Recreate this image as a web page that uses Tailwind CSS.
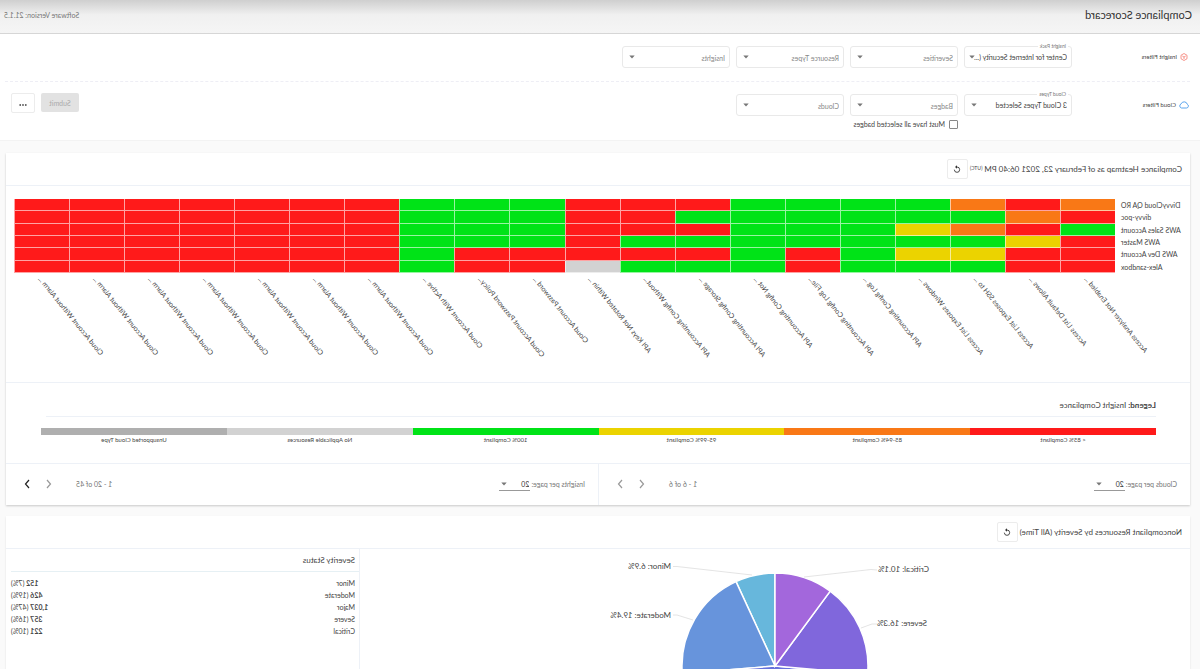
<!DOCTYPE html>
<html lang="en">
<head>
<meta charset="utf-8">
<title>Compliance Scorecard</title>
<script src="https://cdn.jsdelivr.net/npm/@tailwindcss/browser@4"></script>
</head>
<body class="bg-[#fafafa] overflow-hidden">
<svg class="hidden">
  <symbol id="caret" viewBox="0 0 6 4"><path d="M0.3 0.5h5.4L3 3.5z" fill="#777"/></symbol>
  <symbol id="reload" viewBox="0 0 24 24"><path d="M13 6H12A8 8 0 1 0 20 14" fill="none" stroke="#333" stroke-width="2.600"/><path d="M12 0.500L18 6L12 11.500z" fill="#333"/></symbol>
  <symbol id="prev" viewBox="0 0 6 10"><path d="M5 1L1.500 5L5 9" fill="none" stroke="currentColor" stroke-width="1.200"/></symbol>
  <symbol id="next" viewBox="0 0 6 10"><path d="M1 1L4.500 5L1 9" fill="none" stroke="currentColor" stroke-width="1.200"/></symbol>
</svg>
<!-- The whole page is shown mirrored -->
<div class="-scale-x-100 h-screen overflow-hidden bg-[#fafafa] font-[Lato,'Liberation_Sans',sans-serif] text-[7px] leading-[10px] text-[#444] flex flex-col">
  <header class="shrink-0 h-[34px] border-b border-[#d6d6d6] bg-linear-to-b from-[#cfcfcf] from-0% via-[#f0f0f0] via-45% to-[#f5f5f5] flex items-center justify-between pl-2 pr-1 pb-[3px]">
    <h1 class="text-[11px] leading-4 text-[#333]">Compliance Scorecard</h1>
    <span class="text-[7px] text-[#777]">Software Version: 21.1.5</span>
  </header>

  <form class="shrink-0 h-[107px] bg-white border-b border-[#f3f3f3] pl-[10px] pr-[5px]">
    <div class="h-12 border-b border-dashed border-[#eeeef5] flex items-start pt-3">
      <div class="w-[118px] h-[22px] flex items-center gap-[3px] pl-[2px] text-[6px]">
        <svg class="size-2" viewBox="0 0 16 16" fill="none" stroke="#f4695b" stroke-width="1.400"><path d="M8 1l6 3.500v7L8 15l-6-3.500v-7z"/><path d="M4.500 6L8 8l3.500-2M8 8v4"/></svg>
        Insight Filters
      </div>
      <div class="flex gap-[6px]">
        <div class="relative w-[108px] h-[22px]">
          <select id="pack" class="appearance-none w-full h-full border border-[#e9e9e9] rounded-[3px] bg-white pl-1 pr-2 text-[7px]"><option>Center for Internet Security (...</option></select>
          <label for="pack" class="absolute left-1 -top-[3px] px-[2px] bg-white text-[5px] leading-[7px] text-[#777]">Insight Pack</label>
          <svg class="absolute right-[5px] top-[9px] w-[6px] h-1"><use href="#caret"/></svg>
        </div>
        <div class="relative w-[108px] h-[22px]">
          <select aria-label="Severities" class="appearance-none w-full h-full border border-[#e9e9e9] rounded-[3px] bg-white pl-1 pt-[2px] text-[7px] text-[#888]"><option>Severities</option></select>
          <svg class="absolute right-[7px] top-[9px] w-[6px] h-1"><use href="#caret"/></svg>
        </div>
        <div class="relative w-[108px] h-[22px]">
          <select aria-label="Resource Types" class="appearance-none w-full h-full border border-[#e9e9e9] rounded-[3px] bg-white pl-1 pt-[2px] text-[7px] text-[#888]"><option>Resource Types</option></select>
          <svg class="absolute right-[7px] top-[9px] w-[6px] h-1"><use href="#caret"/></svg>
        </div>
        <div class="relative w-[108px] h-[22px]">
          <select aria-label="Insights" class="appearance-none w-full h-full border border-[#e9e9e9] rounded-[3px] bg-white pl-1 pt-[2px] text-[7px] text-[#888]"><option>Insights</option></select>
          <svg class="absolute right-[7px] top-[9px] w-[6px] h-1"><use href="#caret"/></svg>
        </div>
      </div>
    </div>
    <div class="flex items-start pt-3">
      <div class="w-[118px] h-[22px] flex items-center gap-[3px] pl-px text-[6px]">
        <svg class="w-[10px] h-2" viewBox="0 0 20 16" fill="none" stroke="#4a9bea" stroke-width="1.800"><path d="M5 14a4 4 0 0 1-1.500-7.600a6.500 6.500 0 0 1 12.300-.6A4.300 4.300 0 0 1 15 14z"/></svg>
        Cloud Filters
      </div>
      <div class="flex gap-[6px]">
        <div class="relative w-[108px] h-[22px]">
          <select id="types" class="appearance-none w-full h-full border border-[#e9e9e9] rounded-[3px] bg-white pl-1 pr-3 text-[7px]"><option>3 Cloud Types Selected</option></select>
          <label for="types" class="absolute left-1 -top-[3px] px-[2px] bg-white text-[5px] leading-[7px] text-[#777]">Cloud Types</label>
          <svg class="absolute right-[7px] top-[9px] w-[6px] h-1"><use href="#caret"/></svg>
        </div>
        <div class="w-[108px]">
          <div class="relative h-[22px]">
            <select aria-label="Badges" class="appearance-none w-full h-full border border-[#e9e9e9] rounded-[3px] bg-white pl-1 pt-[2px] text-[7px] text-[#888]"><option>Badges</option></select>
            <svg class="absolute right-[7px] top-[9px] w-[6px] h-1"><use href="#caret"/></svg>
          </div>
          <label class="mt-[3px] flex items-center gap-1 whitespace-nowrap text-[7px] leading-[10px]"><input type="checkbox" class="appearance-none size-[9px] border border-[#888] rounded-[1px] bg-white">Must have all selected badges</label>
        </div>
        <div class="relative w-[108px] h-[22px]">
          <select aria-label="Clouds" class="appearance-none w-full h-full border border-[#e9e9e9] rounded-[3px] bg-white pl-1 pt-[2px] text-[7px] text-[#888]"><option>Clouds</option></select>
          <svg class="absolute right-[7px] top-[9px] w-[6px] h-1"><use href="#caret"/></svg>
        </div>
      </div>
      <div class="ml-auto flex gap-[6px] -mt-px mr-[6px]">
        <button type="button" disabled class="w-[38px] h-[19px] rounded-[2px] bg-[#e2e2e2] text-[#aaa] text-[7px]">Submit</button>
        <button type="button" aria-label="More" class="w-6 h-5 rounded-[2px] border border-[#ececec] flex items-center justify-center pt-[3px]"><svg class="w-2 h-[2px]" viewBox="0 0 8 2" fill="#555"><circle cx="1.200" cy="1" r="0.900"/><circle cx="4" cy="1" r="0.900"/><circle cx="6.800" cy="1" r="0.900"/></svg></button>
      </div>
    </div>
  </form>

  <main class="flex-1 min-h-0 pl-[10px] pr-[6px] pt-3">
    <section class="bg-white shadow-[0_1px_2px_rgba(0,0,0,0.2)]">
      <div class="h-[33px] border-b border-[#edf1f7] flex items-center pl-2">
        <h2 class="text-[8px] whitespace-nowrap">Compliance Heatmap as of February 23, 2021 06:40 PM <sup class="text-[5px]">(UTC)</sup></h2>
        <button type="button" aria-label="Refresh heatmap" class="ml-[2px] w-[21px] h-5 border border-[#ececec] rounded-[2px] flex items-center justify-center"><svg class="size-2"><use href="#reload"/></svg></button>
      </div>
      <div class="h-[197px] border-b border-[#edf1f7] pt-[13px] pr-2 flex">
        <div class="w-[75px] shrink-0 pr-[6px] h-[74px] grid grid-rows-6 items-center text-right text-[7px] whitespace-nowrap">
          <span>DivvyCloud QA RO</span><span>divvy-poc</span><span>AWS Sales Account</span><span>AWS Master</span><span>AWS Dev Account</span><span>Alex-sandbox</span>
        </div>
        <div class="flex-1">
          <div id="heat" class="h-[74px] grid grid-rows-6 grid-cols-20"></div>
          <div id="names" class="grid grid-cols-20 text-[7px] leading-2 whitespace-nowrap"></div>
        </div>
      </div>
      <div class="h-[81px] border-b border-[#edf1f7] pt-[17px] pl-[34px] pr-[35px]">
        <h3 class="text-[8px] pb-[6px] border-b border-[#edf1f7] mr-[5px]"><b>Legend:</b> Insight Compliance</h3>
        <ul class="mt-[11px] grid grid-cols-6 text-center text-[6px] leading-[8px]">
          <li><i class="block h-[7px] mb-px bg-[#ff1a1a]"></i>&lt; 85% Compliant</li>
          <li><i class="block h-[7px] mb-px bg-[#f97816]"></i>85-94% Compliant</li>
          <li><i class="block h-[7px] mb-px bg-[#ebd300]"></i>95-99% Compliant</li>
          <li><i class="block h-[7px] mb-px bg-[#00e317]"></i>100% Compliant</li>
          <li><i class="block h-[7px] mb-px bg-[#d2d2d2]"></i>No Applicable Resources</li>
          <li><i class="block h-[7px] mb-px bg-[#afafaf]"></i>Unsupported Cloud Type</li>
        </ul>
      </div>
      <div class="h-[41px] grid grid-cols-2 text-[#777]">
        <div class="flex items-center pl-[13px] pr-[10px] pb-px border-r border-[#edf1f7]">
          <label for="cpp">Clouds per page:</label>
          <div class="relative ml-px w-[31px] h-[13px]">
            <select id="cpp" class="appearance-none w-full h-full border-b border-[#999] text-[7px] text-[#333] pl-px pr-3"><option>20</option></select>
            <svg class="absolute right-[2px] top-[4px] w-[6px] h-1"><use href="#caret"/></svg>
          </div>
          <span class="ml-auto">1 - 6 of 6</span>
          <button type="button" aria-label="Previous clouds" class="ml-6 text-[#999]"><svg class="w-[6px] h-[10px]"><use href="#prev"/></svg></button>
          <button type="button" aria-label="Next clouds" class="ml-4 mr-2 text-[#999]"><svg class="w-[6px] h-[10px]"><use href="#next"/></svg></button>
        </div>
        <div class="flex items-center pl-[13px] pr-[10px] pb-px">
          <label for="ipp">Insights per page:</label>
          <div class="relative ml-px w-[31px] h-[13px]">
            <select id="ipp" class="appearance-none w-full h-full border-b border-[#999] text-[7px] text-[#333] pl-px pr-3"><option>20</option></select>
            <svg class="absolute right-[2px] top-[4px] w-[6px] h-1"><use href="#caret"/></svg>
          </div>
          <span class="ml-auto">1 - 20 of 45</span>
          <button type="button" aria-label="Previous insights" class="ml-6 text-[#999]"><svg class="w-[6px] h-[10px]"><use href="#prev"/></svg></button>
          <button type="button" aria-label="Next insights" class="ml-4 mr-2 text-[#222]"><svg class="w-[6px] h-[10px]"><use href="#next"/></svg></button>
        </div>
      </div>
    </section>

    <section class="mt-[11px] bg-white shadow-[0_1px_2px_rgba(0,0,0,0.1)]">
      <div class="h-[33px] border-b border-[#edf1f7] flex items-center pl-2">
        <h2 class="text-[8px] whitespace-nowrap">Noncompliant Resources by Severity (All Time)</h2>
        <button type="button" aria-label="Refresh severity chart" class="ml-[2px] w-[21px] h-5 border border-[#ececec] rounded-[2px] flex items-center justify-center"><svg class="size-2"><use href="#reload"/></svg></button>
      </div>
      <div class="flex h-60">
        <div class="flex-1 flex justify-center">
          <svg class="w-[400px] h-[234px]" viewBox="-200 -117 400 234" font-size="8" fill="#444">
            <g stroke="#fff" stroke-width="1.500">
              <path d="M0 0L0-93A93 93 0 0 1 39-84.400Z" fill="#67b7dc"/>
              <path d="M0 0L39-84.400A93 93 0 0 1 92.700 7.600Z" fill="#6794dc"/>
              <path d="M0 0L92.700 7.600A93 93 0 0 1-92.600 8.100Z" fill="#6771dc"/>
              <path d="M0 0L-92.600 8.100A93 93 0 0 1-55.200-74.900Z" fill="#8067dc"/>
              <path d="M0 0L-55.200-74.900A93 93 0 0 1 0-93Z" fill="#a367dc"/>
            </g>
            <path d="M-102-96L-96-96.500L-29-89M-102-42H-97L-86-38M102-99.500H98L23-91M102-51H98L82-46" fill="none" stroke="#ddd" stroke-width="0.800"/>
            <text x="-154" y="-94">Critical: 10.1%</text>
            <text x="-152" y="-40">Severe: 16.3%</text>
            <text x="104" y="-97">Minor: 6.9%</text>
            <text x="104" y="-48">Moderate: 19.4%</text>
          </svg>
        </div>
        <div class="w-[354px] shrink-0 border-l border-[#edf1f7] pr-[5px]">
          <h3 class="pl-1 h-[23px] flex items-center border-b border-[#e6f0f4] text-[8px]">Severity Status</h3>
          <table class="w-full mt-[5px] text-[7px] leading-3">
            <tbody>
              <tr><th class="p-0 pl-1 font-normal text-left">Minor</th><td class="p-0 text-right"><b>152</b> (7%)</td></tr>
              <tr><th class="p-0 pl-1 font-normal text-left">Moderate</th><td class="p-0 text-right"><b>426</b> (19%)</td></tr>
              <tr><th class="p-0 pl-1 font-normal text-left">Major</th><td class="p-0 text-right"><b>1,037</b> (47%)</td></tr>
              <tr><th class="p-0 pl-1 font-normal text-left">Severe</th><td class="p-0 text-right"><b>357</b> (16%)</td></tr>
              <tr><th class="p-0 pl-1 font-normal text-left">Critical</th><td class="p-0 text-right"><b>221</b> (10%)</td></tr>
            </tbody>
          </table>
        </div>
      </div>
    </section>
  </main>
</div>
<script>
  const colours = { R: 'bg-[#ff1a1a]', O: 'bg-[#f97816]', Y: 'bg-[#ebd300]', G: 'bg-[#00e317]', N: 'bg-[#d2d2d2]' };
  // One string per account, one letter per insight
  const rows = [
    'OROGGGGRRRGGGRRRRRRR',
    'ROGGGGGGRRGGGRRRRRRR',
    'GROYGGGRRRGGGRRRRRRR',
    'RYGGGGGGGRGGGRRRRRRR',
    'RRYYGRGRRRRRGRRRRRRR',
    'RRGGGRGGGNRRGRRRRRRR'
  ];
  const alarm = 'Cloud Account Without Alarm ...';
  const insights = ['Access Analyzer Not Enabled ...', 'Access List Default Allows ...', 'Access List Exposes SSH to ...', 'Access List Exposes Windows ...',
    'API Accounting Config Log ...', 'API Accounting Config Log File...', 'API Accounting Config Not ...', 'API Accounting Config Storage ...',
    'API Accounting Config Without...', 'API Keys Not Rotated Within ...', 'Cloud Account Password ...', 'Cloud Account Password Policy...',
    'Cloud Account With Active ...', alarm, alarm, alarm, alarm, alarm, alarm, alarm];
  document.getElementById('heat').innerHTML = rows.map(r => [...r].map(c => `<div class="border-r border-b border-white/60 ${colours[c]}"></div>`).join('')).join('');
  document.getElementById('names').innerHTML = insights.map(t => `<div class="relative h-0"><span class="absolute right-[26px] top-0 origin-right rotate-[-51deg]">${t}</span></div>`).join('');
</script>
</body>
</html>
